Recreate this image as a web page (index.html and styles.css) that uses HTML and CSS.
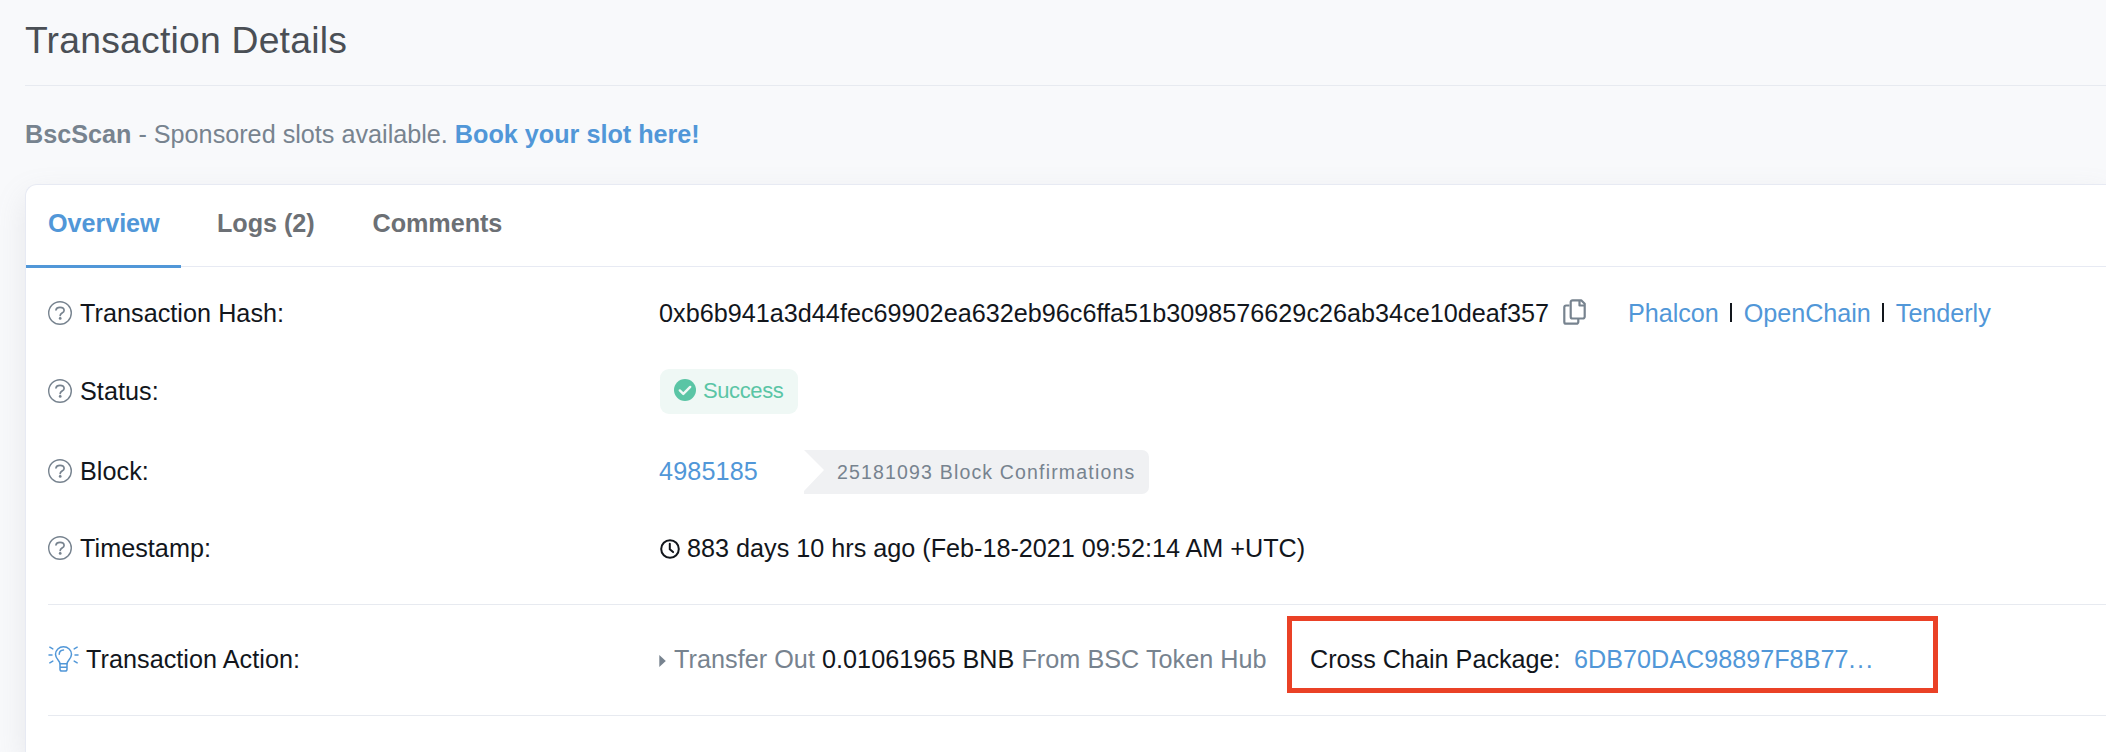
FILE: index.html
```
<!DOCTYPE html>
<html lang="en">
<head>
<meta charset="utf-8">
<title>Transaction Details</title>
<link rel="stylesheet" href="styles.css">
</head>
<body>
<svg class="defs" aria-hidden="true">
  <symbol id="help" viewBox="0 0 24 24">
    <circle cx="12" cy="12" r="11.3" fill="none" stroke="currentColor" stroke-width="1.4"/>
    <path d="M8 8.900C8.300 7.200 9.800 6.300 12 6.300c2.300 0 4.100 1.100 4.100 3.100 0 2.600-3.900 2.700-3.900 5" fill="none" stroke="currentColor" stroke-width="1.700" stroke-linecap="round"/>
    <circle cx="12.200" cy="17.400" r="1.400" fill="currentColor"/>
  </symbol>
</svg>
<main class="page">
  <header class="head"><h1 class="title">Transaction Details</h1></header>
  <p class="sponsor"><b class="brand">BscScan</b><span class="slots"> - Sponsored slots available. </span><a class="book">Book your slot here!</a></p>
  <section class="card">
    <nav class="tabs">
      <a class="tab active">Overview</a>
      <a class="tab logs">Logs (2)</a>
      <a class="tab comments">Comments</a>
    </nav>
    <div class="body">
      <div class="row hash">
        <div class="label"><svg class="help"><use href="#help"/></svg><span>Transaction Hash:</span></div>
        <div class="value">
          <span class="hash-text">0xb6b941a3d44fec69902ea632eb96c6ffa51b3098576629c26ab34ce10deaf357</span>
          <svg class="copy" viewBox="0 0 23 26" fill="none" stroke="currentColor" stroke-width="2.200" stroke-linejoin="round"><path d="M6.500 6.500H3.100a1.800 1.800 0 0 0-1.800 1.800v14.600a1.800 1.800 0 0 0 1.800 1.800h10.400a1.800 1.800 0 0 0 1.800-1.800v-3"/><path d="M9.500 1.300h8.700l3.500 3.500v12.900a1.800 1.800 0 0 1-1.800 1.800H9.500a1.800 1.800 0 0 1-1.800-1.800V3.100a1.800 1.800 0 0 1 1.800-1.800z"/><path d="M16.500 1.500v5h5"/></svg>
          <span class="tools"><a>Phalcon</a><i class="bar"></i><a>OpenChain</a><i class="bar"></i><a>Tenderly</a></span>
        </div>
      </div>
      <div class="row status">
        <div class="label"><svg class="help"><use href="#help"/></svg><span>Status:</span></div>
        <div class="value"><span class="success"><svg class="check" viewBox="0 0 22 22"><circle cx="11" cy="11" r="11" fill="currentColor"/><path d="M5.800 11.400l3.500 3.500 6.900-7" fill="none" stroke="#eff8f5" stroke-width="2.400" stroke-linecap="round" stroke-linejoin="round"/></svg><span>Success</span></span></div>
      </div>
      <div class="row block">
        <div class="label"><svg class="help"><use href="#help"/></svg><span>Block:</span></div>
        <div class="value"><a class="number">4985185</a><span class="confirm">25181093 Block Confirmations</span></div>
      </div>
      <div class="row time">
        <div class="label"><svg class="help"><use href="#help"/></svg><span>Timestamp:</span></div>
        <div class="value"><svg class="clock" viewBox="0 0 20 20" fill="none" stroke="currentColor" stroke-width="2"><circle cx="10" cy="10" r="8.800"/><path d="M9.800 4.800v5.400l3.300 2.900" stroke-linecap="round"/></svg><span class="date">883 days 10 hrs ago (Feb-18-2021 09:52:14 AM +UTC)</span></div>
      </div>
      <div class="row action">
        <div class="label"><svg class="bulb" viewBox="0 0 31 26" fill="none" stroke="currentColor" stroke-width="1.500" stroke-linecap="round" stroke-linejoin="round"><path d="M12 17.800c0-3.100-4.500-4.900-4.500-9.500a8 7.500 0 0 1 16 0c0 4.600-4.500 6.400-4.500 9.500z"/><path d="M12 17.800v5.400q0 1.800 1.800 1.800h3.400q1.800 0 1.800-1.800v-5.400M12 21.200h7M11.200 8.300a4.500 4.500 0 0 1 4.300-4.200M1 9h3M27 9h3M1.800 1.200l3 1.700M29.200 1.200l-3 1.700M1.800 16.800l3-1.700M29.200 16.800l-3-1.700"/></svg><span>Transaction Action:</span></div>
        <div class="value">
          <svg class="caret" viewBox="0 0 7 12"><path d="M.3 0v12L6.800 6z" fill="currentColor"/></svg>
          <span class="transfer">Transfer Out <span class="amount">0.01061965 BNB</span> From BSC Token Hub</span>
          <div class="package"><span class="package-label">Cross Chain Package:</span><a class="package-link">6DB70DAC98897F8B77<span class="dots">...</span></a></div>
        </div>
      </div>
    </div>
  </section>
</main>
</body>
</html>
```
FILE: styles.css
```
* { box-sizing: border-box; }
body {
  margin: 0;
  height: 752px;
  overflow: hidden;
  background: #f8f9fb;
  color: #12161c;
  font: 25.2px/40px "Liberation Sans", Arial, sans-serif;
}
.defs { display: none; }
.page { padding-left: 25px; }
svg { display: block; flex: none; }
a { color: #5197d8; white-space: nowrap; }

.head { height: 86px; padding-top: 15px; border-bottom: 1px solid #e7eaf0; }
.title { margin: 0; font-size: 37.300px; line-height: 50px; font-weight: 400; letter-spacing: .22px; color: #4a4f55; }
.sponsor { margin: 28px 0 30px; height: 40px; color: #77838f; white-space: pre; }
.book { font-weight: 700; }

.card {
  height: 568px;
  border: 1px solid #e7eaf3;
  border-width: 1px 0 0 1px;
  border-radius: 12px 0 0 0;
  background: #fff;
  box-shadow: 0 12px 30px rgba(140, 145, 152, .17);
}
.tabs { display: flex; height: 82px; border-bottom: 1px solid #e7eaf3; }
.tab { height: 83px; padding: 18px 22px 0; font-weight: 700; color: #6c7075; letter-spacing: -.05px; }
.tab.active { width: 155px; color: #5197d8; border-bottom: 3px solid #5197d8; }
.tab.logs { margin-left: 14px; }
.tab.comments { margin-left: 14px; }

.body { padding: 26px 0 0 22px; }
.row { display: flex; height: 78px; }
.label { display: flex; width: 611px; gap: 8px; white-space: nowrap; letter-spacing: .04px; }
.value { display: flex; white-space: nowrap; }
.help { width: 24px; height: 24px; margin-top: 7.500px; color: #77838f; }

.hash-text { width: 889px; letter-spacing: .015px; }
.copy { width: 23px; height: 26px; margin: 6px 42px 0 15px; color: #77838f; }
.tools { display: flex; letter-spacing: -.04px; }
.bar { width: 2px; height: 19px; margin: 10px 11.500px 0; background: #12161c; }

.status { height: 80px; }
.success {
  display: flex;
  width: 138px;
  height: 45px;
  margin: -2px 0 0 1px;
  padding-left: 14px;
  gap: 7px;
  border-radius: 9px;
  background: #eff8f5;
  color: #5ac5a5;
  font-size: 22px;
  line-height: 43px;
  letter-spacing: -.4px;
}
.check { width: 22px; height: 22px; margin-top: 10px; }

.block { height: 77px; }
.number { width: 145px; letter-spacing: .12px; }
.confirm {
  width: 345px;
  height: 44px;
  margin-top: -1px;
  padding-left: 33px;
  border-radius: 0 7px 7px 0;
  background: #f0f1f3;
  color: #77838f;
  font-size: 19.500px;
  line-height: 44px;
  letter-spacing: 1.170px;
  clip-path: polygon(0 0, 100% 0, 100% 100%, 0 100%, 0 41px, 20px 20px);
}

.time { height: 76px; }
.clock { width: 20px; height: 20px; margin: 11px 7px 0 1px; }

.action { height: 112px; padding-top: 34px; border: solid #e7eaf0; border-width: 1px 0; }
.action .label { gap: 7px; }
.bulb { width: 31px; height: 26px; margin-top: 7px; color: #5197d8; }
.caret { width: 7px; height: 12px; margin: 16px 8px 0 0; color: #77838f; }
.transfer { width: 613px; color: #77838f; letter-spacing: .04px; }
.amount { color: #12161c; }
.package {
  display: flex;
  width: 651px;
  height: 77px;
  margin-top: -23px;
  padding: 18px 0 0 18px;
  border: 5px solid #ea4126;
}
.package-label { width: 264px; }
.dots { letter-spacing: 1.600px; }
```
